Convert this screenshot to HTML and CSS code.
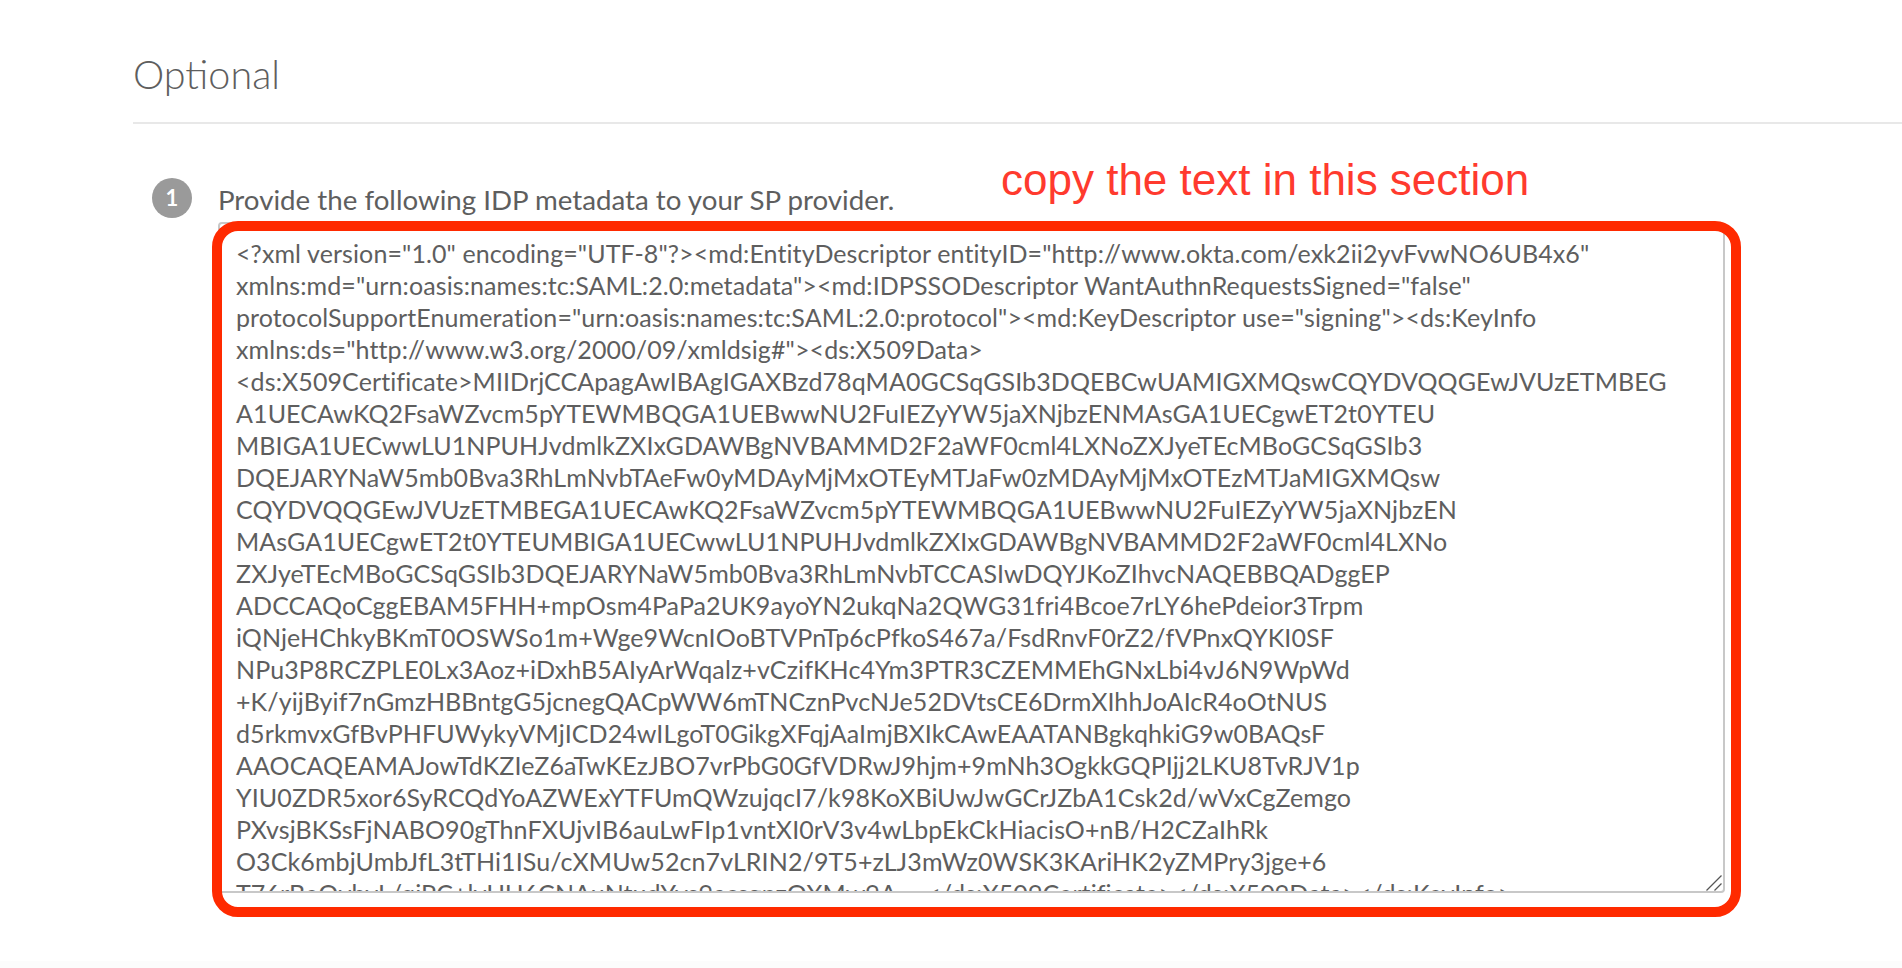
FILE: index.html
```html
<!DOCTYPE html>
<html lang="en">
<head>
<meta charset="utf-8">
<title>Optional</title>
<link rel="stylesheet" href="styles.css">
</head>
<body>
<main class="page">
  <h2 class="section-title">Optional</h2>
  <section class="step">
    <div class="step-badge">1</div>
    <div class="step-body">
      <p class="step-label">Provide the following IDP metadata to your SP provider.</p>
      <div class="metadata-wrap">
      <textarea class="metadata" readonly wrap="off">&lt;?xml version="1.0" encoding="UTF-8"?&gt;&lt;md:EntityDescriptor entityID="http://www.okta.com/exk2ii2yvFvwNO6UB4x6"
xmlns:md="urn:oasis:names:tc:SAML:2.0:metadata"&gt;&lt;md:IDPSSODescriptor WantAuthnRequestsSigned="false"
protocolSupportEnumeration="urn:oasis:names:tc:SAML:2.0:protocol"&gt;&lt;md:KeyDescriptor use="signing"&gt;&lt;ds:KeyInfo
xmlns:ds="http://www.w3.org/2000/09/xmldsig#"&gt;&lt;ds:X509Data&gt;
&lt;ds:X509Certificate&gt;MIIDrjCCApagAwIBAgIGAXBzd78qMA0GCSqGSIb3DQEBCwUAMIGXMQswCQYDVQQGEwJVUzETMBEG
A1UECAwKQ2FsaWZvcm5pYTEWMBQGA1UEBwwNU2FuIEZyYW5jaXNjbzENMAsGA1UECgwET2t0YTEU
MBIGA1UECwwLU1NPUHJvdmlkZXIxGDAWBgNVBAMMD2F2aWF0cml4LXNoZXJyeTEcMBoGCSqGSIb3
DQEJARYNaW5mb0Bva3RhLmNvbTAeFw0yMDAyMjMxOTEyMTJaFw0zMDAyMjMxOTEzMTJaMIGXMQsw
CQYDVQQGEwJVUzETMBEGA1UECAwKQ2FsaWZvcm5pYTEWMBQGA1UEBwwNU2FuIEZyYW5jaXNjbzEN
MAsGA1UECgwET2t0YTEUMBIGA1UECwwLU1NPUHJvdmlkZXIxGDAWBgNVBAMMD2F2aWF0cml4LXNo
ZXJyeTEcMBoGCSqGSIb3DQEJARYNaW5mb0Bva3RhLmNvbTCCASIwDQYJKoZIhvcNAQEBBQADggEP
ADCCAQoCggEBAM5FHH+mpOsm4PaPa2UK9ayoYN2ukqNa2QWG31fri4Bcoe7rLY6hePdeior3Trpm
iQNjeHChkyBKmT0OSWSo1m+Wge9WcnIOoBTVPnTp6cPfkoS467a/FsdRnvF0rZ2/fVPnxQYKI0SF
NPu3P8RCZPLE0Lx3Aoz+iDxhB5AIyArWqalz+vCzifKHc4Ym3PTR3CZEMMEhGNxLbi4vJ6N9WpWd
+K/yijByif7nGmzHBBntgG5jcnegQACpWW6mTNCznPvcNJe52DVtsCE6DrmXIhhJoAIcR4oOtNUS
d5rkmvxGfBvPHFUWykyVMjICD24wILgoT0GikgXFqjAaImjBXIkCAwEAATANBgkqhkiG9w0BAQsF
AAOCAQEAMAJowTdKZIeZ6aTwKEzJBO7vrPbG0GfVDRwJ9hjm+9mNh3OgkkGQPIjj2LKU8TvRJV1p
YIU0ZDR5xor6SyRCQdYoAZWExYTFUmQWzujqcI7/k98KoXBiUwJwGCrJZbA1Csk2d/wVxCgZemgo
PXvsjBKSsFjNABO90gThnFXUjvIB6auLwFIp1vntXI0rV3v4wLbpEkCkHiacisO+nB/H2CZaIhRk
O3Ck6mbjUmbJfL3tTHi1ISu/cXMUw52cn7vLRIN2/9T5+zLJ3mWz0WSK3KAriHK2yZMPry3jge+6
T76rBeQvbvL/qjPC+lyUU6CNAuNtudYvs9acsgpzOXMw9A==&lt;/ds:X509Certificate&gt;&lt;/ds:X509Data&gt;&lt;/ds:KeyInfo&gt;</textarea>
        <svg class="grip" viewBox="0 0 16 16" width="16" height="16" aria-hidden="true">
          <path d="M0.5 15.5 15.5 0.5M8.5 15.5 15.5 8.5" />
        </svg>
      </div>
    </div>
  </section>
  <div class="callout-frame"></div>
  <p class="callout-text">copy the text in this section</p>
</main>
<div class="page-end"></div>
</body>
</html>
```
FILE: styles.css
```css
html, body {
  margin: 0;
  height: 968px;
  overflow: hidden;
  background: #fff;
}
body {
  display: flex;
  flex-direction: column;
  font-family: Lato, "Open Sans", sans-serif;
  color: #5e5e5e;
}
.page {
  position: relative;
  flex: 1;
  padding-left: 133px;
}
.section-title {
  margin: 0;
  padding: 51px 0 25px;
  border-bottom: 2px solid #e8e8e8;
  font-size: 39.5px;
  line-height: 46px;
  font-weight: 300;
  color: #5e5e5e;
}
.step {
  display: flex;
  gap: 26px;
  margin: 54px 0 0 19px;
}
.step-badge {
  position: relative;
  flex: none;
  width: 40px;
  height: 40px;
  border-radius: 50%;
  background: #9a9a9a;
  color: #fff;
  font-size: 22px;
  font-weight: 700;
  line-height: 40px;
  text-align: center;
}
.step-badge::after {
  content: "";
  position: absolute;
  left: 38px;
  top: 28px;
  width: 2px;
  height: 4px;
  background: #3aa5e0;
  z-index: -1;
}
.step-label {
  margin: 0;
  font-size: 27.7px;
  line-height: 44px;
}
.metadata-wrap {
  position: relative;
  width: 1507px;
  height: 671px;
}
.metadata {
  display: block;
  box-sizing: border-box;
  width: 100%;
  height: 100%;
  padding: 13px 16px 0;
  border: 2px solid #c8c8c8;
  border-radius: 4px;
  outline: none;
  background: #fff;
  color: #5e5e5e;
  font-family: Lato, "Open Sans", sans-serif;
  font-size: 25px;
  letter-spacing: 0.1px;
  line-height: 32px;
  white-space: pre;
  overflow: hidden;
  resize: none;
}
.grip {
  position: absolute;
  right: 3px;
  bottom: 2px;
  fill: none;
  stroke: #555;
  stroke-width: 1.3;
}
.callout-frame {
  position: absolute;
  left: 212px;
  top: 221px;
  width: 1529px;
  height: 696px;
  box-sizing: border-box;
  border: 10px solid #ff2a00;
  border-radius: 26px;
  pointer-events: none;
}
.callout-text {
  position: absolute;
  left: 1001px;
  top: 156px;
  margin: 0;
  font-family: "Liberation Sans", Arial, sans-serif;
  font-size: 44px;
  line-height: 48px;
  color: #ff3a2e;
  white-space: nowrap;
}
.page-end {
  flex: none;
  height: 7px;
  background: #fcfcfc;
}
```
